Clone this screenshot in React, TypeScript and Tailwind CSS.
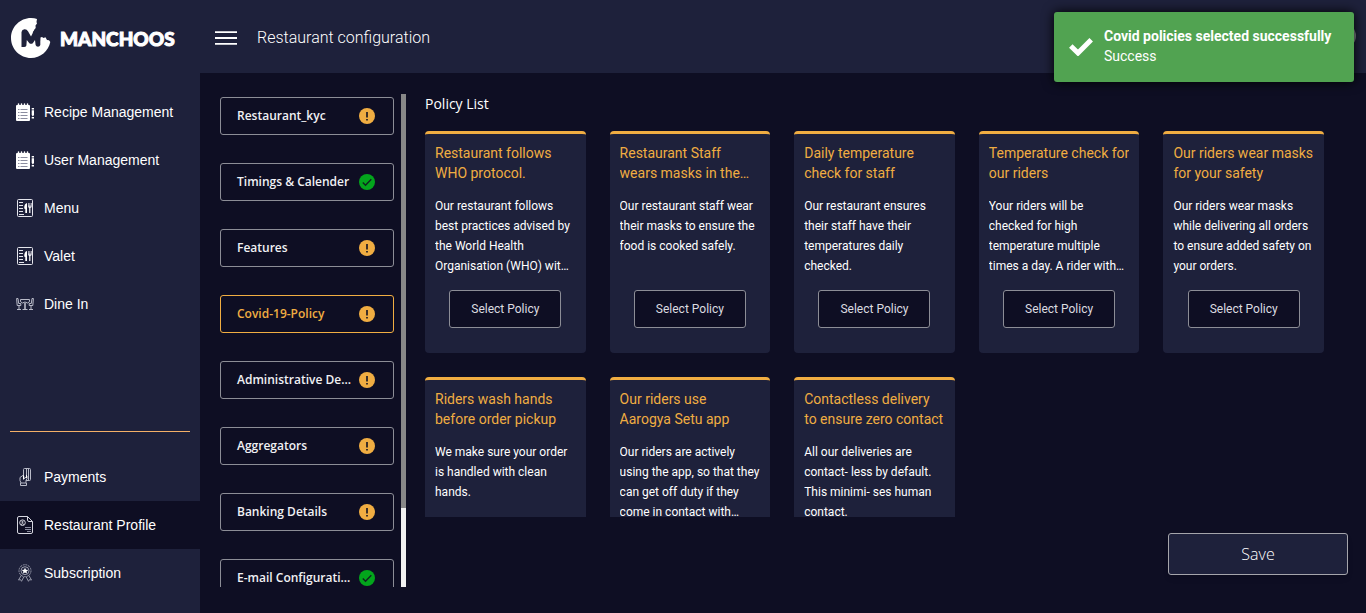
import type { ReactNode } from "react";

type NavItem = { label: string; icon: ReactNode; active?: boolean };

const NotebookIcon = () => (
  <svg viewBox="0 0 18 18" className="size-[18px]" aria-hidden="true">
    <rect x="0" y="2" width="14" height="16" rx="1" fill="#fff" />
    <path stroke="#fff" strokeWidth="1.500" strokeLinecap="round" d="M2.500 1v2M5.500 1v2M8.500 1v2M11.500 1v2" />
    <path stroke="#8b8da0" strokeWidth="1.200" d="M2 6.500h1.500M4.500 6.500h7M2 9.500h1.500M4.500 9.500h7M2 12.500h1.500M4.500 12.500h7M2 15.500h1.500M4.500 15.500h7" />
    <path fill="#fff" d="M15.700 5h2.300v1.500h-2.300zM15.700 7.200h2.300V12l-1.100 1.500-1.200-1.500zM15.700 14h2.300v1.500h-2.300z" />
  </svg>
);

const MenuCardIcon = () => (
  <svg viewBox="0 0 18 18" className="size-[18px]" fill="none" aria-hidden="true">
    <rect x="1.500" y=".5" width="15" height="17" rx="1" stroke="#e4e5ec" />
    <path stroke="#e4e5ec" d="M3 3.500h4M3 6.500h4M3 9.500h4M3 12.500h4M3 15.500h5" />
    <path fill="#fff" d="M11 4v10H9.300V10L8.200 9.500c0-3 .8-5 2.800-5.500z" />
    <path fill="#c9cad4" d="M12 4h.8v2.500h.6V4h1v2.500h.6V4h.8v4l-1 1h-1.800l-1-1z" />
    <path stroke="#fff" strokeWidth="1.200" d="M13.800 8v6" />
  </svg>
);

const DineIcon = () => (
  <svg viewBox="0 0 18 18" className="size-[18px]" fill="none" stroke="#b9bbc8" aria-hidden="true">
    <path d="M.6 3.500 1.200 10.500h3.600v-2H2.700L2 3.500zM3 10.500v4M1 14.500h4" />
    <path d="M17.400 3.500 16.800 10.500h-3.600v-2h2.100L16 3.500zM15 10.500v4M13 14.500h4" />
    <path d="M4.500 4.500h9v2.200l-2 1.300-2.500-1-2.500 1-2-1.300z" />
    <path strokeWidth="1.600" d="M9 8v6" />
    <path d="M6.500 14.500h5" />
  </svg>
);

const PaymentIcon = () => (
  <svg viewBox="0 0 18 18" className="size-[18px]" fill="none" stroke="#b9bbc8" aria-hidden="true">
    <path d="M7.500 9V1.500q0-1 1-1h5q1 0 1 1v10q0 1-1 1h-3.500M10.500 1v8M12.500 1v11" />
    <path d="M7.500 7 4 9.500v3L5 15h5v-2.500l1-2V8l-3 3V8.500" />
    <path stroke="#fff" d="M7.500 7.500v4M10.500 7v3" />
    <path d="M4.500 15v2.500h6V15" />
  </svg>
);

const ProfileIcon = () => (
  <svg viewBox="0 0 18 18" className="size-[18px]" fill="none" stroke="#d5d6df" aria-hidden="true">
    <path d="M3 .5h8.500l5 5V16q0 1.500-1.500 1.500H3Q1.500 17.500 1.500 16V2Q1.500.5 3 .5zM11.500.5V4q0 1.500 1.500 1.500h3.500" />
    <circle cx="6.500" cy="6.700" r="2.800" />
    <circle cx="6.500" cy="6" r=".7" />
    <path d="M5 8.500q1.500-1.500 3 0" />
    <path stroke="#8b8da0" d="M9 11.500h6M9 13.500h6M11 15.500h4" />
  </svg>
);

const AwardIcon = () => (
  <svg viewBox="0 0 18 18" className="size-[18px]" fill="none" stroke="#9698a9" aria-hidden="true">
    <circle cx="9" cy="6.700" r="6" strokeDasharray="2 .8" />
    <circle cx="9" cy="6.700" r="4" />
    <path fill="#fff" stroke="none" d="m9 3.700 1 2 2.200.2-1.600 1.500.4 2.200-2-1.100-2 1.100.4-2.200-1.600-1.500L8 5.700z" />
    <path d="m5.500 11-3 5 2-.4 1 1.700L8 12.500M12.500 11l3 5-2-.4-1 1.700L10 12.500" />
  </svg>
);

const WarningBadge = () => (
  <svg viewBox="0 0 16 16" className="size-4 shrink-0" role="img" aria-label="Pending">
    <circle cx="8" cy="8" r="8" fill="#f0ad42" />
    <path fill="#3d3028" d="M7 4h2v5.500H7zM7 11h2v1.500H7z" />
  </svg>
);

const DoneBadge = () => (
  <svg viewBox="0 0 16 16" className="size-4 shrink-0" role="img" aria-label="Complete">
    <circle cx="8" cy="8" r="8" fill="#03a51c" />
    <path fill="none" stroke="#10241f" strokeWidth="1.400" d="m3.800 8.500 2.700 2.700 5.800-6" />
  </svg>
);

const mainNav: NavItem[] = [
  { label: "Recipe Management", icon: <NotebookIcon /> },
  { label: "User Management", icon: <NotebookIcon /> },
  { label: "Menu", icon: <MenuCardIcon /> },
  { label: "Valet", icon: <MenuCardIcon /> },
  { label: "Dine In", icon: <DineIcon /> },
];

const accountNav: NavItem[] = [
  { label: "Payments", icon: <PaymentIcon /> },
  { label: "Restaurant Profile", icon: <ProfileIcon />, active: true },
  { label: "Subscription", icon: <AwardIcon /> },
];

const steps = [
  { label: "Restaurant_kyc" },
  { label: "Timings & Calender", done: true },
  { label: "Features" },
  { label: "Covid-19-Policy", active: true },
  { label: "Administrative De..." },
  { label: "Aggregators" },
  { label: "Banking Details" },
  { label: "E-mail Configurati...", done: true },
];

const policies = [
  {
    title: "Restaurant follows WHO protocol.",
    text: "Our restaurant follows best practices advised by the World Health Organisation (WHO) wit…",
  },
  {
    title: "Restaurant Staff wears masks in the…",
    text: "Our restaurant staff wear their masks to ensure the food is cooked safely.",
  },
  {
    title: "Daily temperature check for staff",
    text: "Our restaurant ensures their staff have their temperatures daily checked.",
  },
  {
    title: "Temperature check for our riders",
    text: "Your riders will be checked for high temperature multiple times a day. A rider with…",
  },
  {
    title: "Our riders wear masks for your safety",
    text: "Our riders wear masks while delivering all orders to ensure added safety on your orders.",
  },
  {
    title: "Riders wash hands before order pickup",
    text: "We make sure your order is handled with clean hands.",
  },
  {
    title: "Our riders use Aarogya Setu app",
    text: "Our riders are actively using the app, so that they can get off duty if they come in contact with…",
  },
  {
    title: "Contactless delivery to ensure zero contact",
    text: "All our deliveries are contact- less by default. This minimi- ses human contact.",
  },
];

function NavList({ items }: { items: NavItem[] }) {
  return (
    <ul>
      {items.map((item) => (
        <li key={item.label}>
          <a
            href="#"
            className={`flex h-12 items-center gap-[10px] pl-4 text-sm text-white ${item.active ? "bg-[#0e0e23]" : ""}`}
          >
            {item.icon}
            {item.label}
          </a>
        </li>
      ))}
    </ul>
  );
}

function Logo() {
  return (
    <a href="#" className="flex h-[73px] items-center gap-[9px] pt-[3px] pl-[11px] text-white">
      <svg viewBox="0 0 40 40" className="size-10 shrink-0" aria-hidden="true">
        <path
          fill="#fff"
          d="M26 1 25.500 4l.5 1.500-1.500 2 .2 2.500-3 4.500L29 24l.3-4.500 1.700-.5 1.500 1 2-.8 1.500 2.800 2 .3L39.300 24C37.500 33 29.500 40 20 40 9 40 0 31 0 20S9 0 20 0q3.500 0 6 1z"
        />
        <path
          fill="#1e213b"
          d="M10.500 29V14q.5-2.500 3-2.800 2.300-.2 3.500 2l3 5.300 3.500-7 2-1.500 2.500 3 1.300 3.500V27q-.5 1.800-2.300 1.800T24.600 27l-.6-5-2.200 3.200q-1.800 1.300-3.400 0L15.800 22l-.4 5.500q-.6 1.500-2.400 1.500z"
        />
      </svg>
      <span className="font-['Lato',sans-serif] text-[19px] leading-none font-black [-webkit-text-stroke:1px_#fff]">
        MANCHOOS
      </span>
    </a>
  );
}

function PolicyCard({ title, text }: { title: string; text: string }) {
  return (
    <article className="flex h-[222px] flex-col rounded-[4px] border-t-3 border-[#f0ad42] bg-[#1e213b] px-[10px] pt-[9px]">
      <h3 className="line-clamp-2 h-10 text-sm leading-5 text-[#f0ad42]">{title}</h3>
      <p className="mt-[13px] line-clamp-4 h-20 shrink-0 text-xs leading-5 text-white">{text}</p>
      <button
        type="button"
        className="mt-[14px] h-[38px] w-28 shrink-0 self-center rounded-[3px] border border-[#8c8d96] bg-[#0e0e23] text-xs text-[#dcdce0]"
      >
        Select Policy
      </button>
    </article>
  );
}

export default function App() {
  return (
    <div className="flex h-screen overflow-hidden bg-[#0e0e23] font-['Roboto',sans-serif] text-white">
      <aside className="flex w-[200px] shrink-0 flex-col bg-[#1e213b] font-['Liberation_Sans',sans-serif]">
        <Logo />
        <nav className="flex flex-1 flex-col justify-between pt-[15px] pb-4">
          <NavList items={mainNav} />
          <div>
            <hr className="mx-[10px] mb-[21px] border-[#f4b067]" />
            <NavList items={accountNav} />
          </div>
        </nav>
      </aside>

      <div className="flex min-w-0 flex-1 flex-col">
        <header className="flex h-[73px] shrink-0 items-center gap-[19px] bg-[#1e213b] pt-[3px] pl-[15px]">
          <button type="button" aria-label="Toggle menu">
            <svg viewBox="0 0 23 14" className="h-[14px] w-[23px]" aria-hidden="true">
              <path fill="#fff" d="M0 .3h22v1.600H0zM0 6h22v2H0zM0 12.100h22v1.600H0z" />
            </svg>
          </button>
          <h1 className="text-base leading-6 font-light">Restaurant configuration</h1>
        </header>

        <main className="flex min-h-0 flex-1 pt-[21px] pb-[26px]">
          <div className="flex shrink-0 gap-[7px] overflow-hidden pl-5 font-['Open_Sans',sans-serif]">
            <ul className="flex w-[174px] flex-col gap-7 pt-[3px]">
              {steps.map((step) => (
                <li key={step.label}>
                  <button
                    type="button"
                    className={`flex h-[38px] w-full items-center justify-between rounded-[3px] border pr-[18px] pl-4 text-xs font-semibold ${
                      step.active ? "border-[#f0ad42] text-[#f0ad42]" : "border-[#8c8d96] text-[#f1f1f4]"
                    }`}
                  >
                    <span className="whitespace-nowrap">{step.label}</span>
                    {step.done ? <DoneBadge /> : <WarningBadge />}
                  </button>
                </li>
              ))}
            </ul>
            <div className="w-[5px] bg-[#f1f1f1]">
              <div className="h-[84%] bg-[#888]" />
            </div>
          </div>

          <section className="flex min-w-0 flex-1 flex-col pb-3 pl-[19px]">
            <h2 className="h-[37px] shrink-0 font-['Open_Sans',sans-serif] text-sm leading-5">Policy List</h2>
            <div className="grid min-h-0 flex-1 grid-cols-5 content-start gap-6 overflow-hidden pr-[42px]">
              {policies.map((policy) => (
                <PolicyCard key={policy.title} title={policy.title} text={policy.text} />
              ))}
            </div>
            <button
              type="button"
              className="mt-4 mr-[18px] h-[42px] w-[180px] shrink-0 self-end rounded-[3px] border border-[#a5a5ab] bg-[#1e213b] font-['Open_Sans',sans-serif] text-base font-light shadow-md"
            >
              Save
            </button>
          </section>
        </main>
      </div>

      <div className="absolute top-6 right-[10px] size-6 rounded-full bg-[#8c8d96]" />
      <div
        role="status"
        className="absolute top-3 right-3 flex h-[70px] w-[300px] items-center gap-[11px] rounded-[3px] bg-[#51a351] pl-[15px] text-sm leading-5 shadow-[0_0_12px_#000]"
      >
        <svg viewBox="0 0 24 18" className="h-[18px] w-6 shrink-0" aria-hidden="true">
          <path fill="none" stroke="#fff" strokeWidth="5" d="m1.800 8 7.200 7L22.200 1.800" />
        </svg>
        <div className="pb-[2px]">
          <p className="font-bold">Covid policies selected successfully</p>
          <p>Success</p>
        </div>
      </div>
    </div>
  );
}
